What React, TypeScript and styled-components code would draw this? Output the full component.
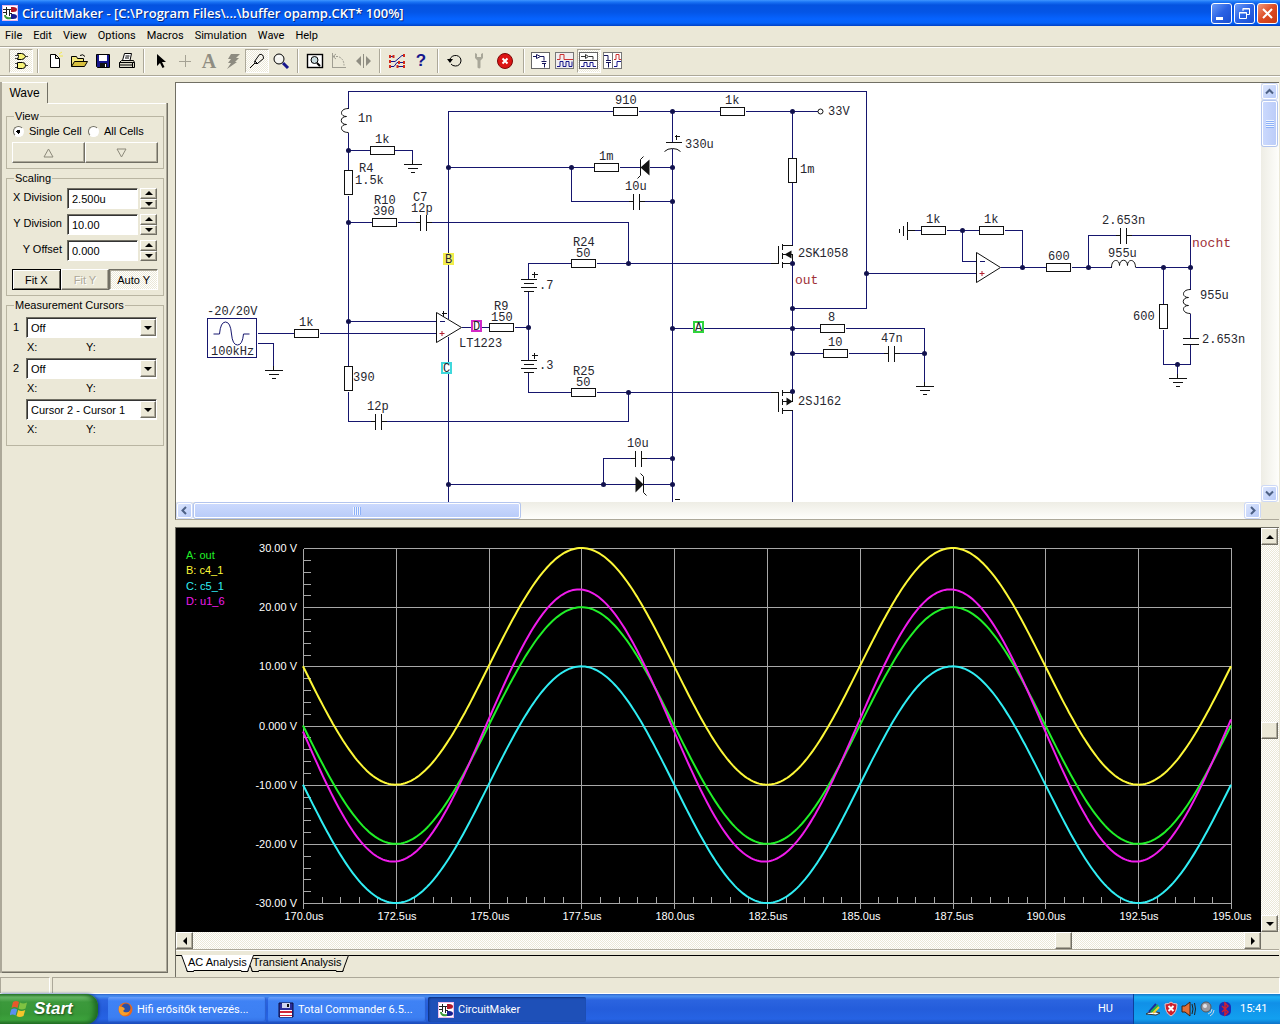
import React from "react";
import styled, { createGlobalStyle, css } from "styled-components";

const face = "#ebe8d7";
const shade = "#aca899";
const dark = "#716f64";
const ui = `Roboto, "Liberation Sans", sans-serif`;
const sans = `"Liberation Sans", Arial, sans-serif`;
const mono = `"Liberation Mono", "Courier New", monospace`;

const Global = createGlobalStyle`
  * { box-sizing: border-box; }
  body { margin: 0; background: ${face}; }
  button, input, select { font: inherit; color: inherit; margin: 0; padding: 0; }
  svg { display: block; }
`;

const raised = css`
  border: 1px solid;
  border-color: #fff ${dark} ${dark} #fff;
  box-shadow: inset -1px -1px 0 ${shade};
`;
const sunken = css`
  border: 1px solid;
  border-color: ${shade} #fff #fff ${shade};
`;
const dither = css`
  background: repeating-conic-gradient(#fff 0 25%, ${face} 0 50%) 0 0 / 2px 2px;
`;

/* ---------- window frame ---------- */

const Desktop = styled.div`
  display: flex;
  flex-direction: column;
  min-height: 100vh;
  background: ${face};
  font: 11px/14px ${sans};
  color: #000;
`;
const TitleBar = styled.header`
  display: flex;
  align-items: center;
  gap: 4px;
  height: 26px;
  padding: 0 2px;
  background: linear-gradient(#3f96ff 0, #1a74f5 2px, #0453e0 5px, #0455e6 12px, #0663ff 19px, #0462f8 23px, #0040c4 26px);
`;
const Title = styled.h1`
  flex: 1;
  margin: 0;
  font: 600 13px/20px "Open Sans", sans-serif;
  color: #fff;
  text-shadow: 1px 1px 0 #0a2a80;
  white-space: nowrap;
`;
const Captions = styled.div`
  display: flex;
  gap: 2px;
`;
const Caption = styled.button<{ $close?: boolean }>`
  width: 21px;
  height: 21px;
  border: 1px solid #fff;
  border-radius: 3px;
  background: ${(p) =>
    p.$close
      ? "linear-gradient(135deg, #f0987c, #dd4a22 50%, #c73a14)"
      : "linear-gradient(135deg, #6c9cf8, #2a62e4 50%, #1b4fd0)"};
`;
const MenuBar = styled.nav`
  display: flex;
  gap: 11px;
  height: 20px;
  padding: 0 5px;
  align-items: center;
  font: 11px/16px ${ui};
`;
const MenuItem = styled.button`
  border: 0;
  background: none;
`;
const ToolBar = styled.div`
  display: flex;
  align-items: center;
  height: 30px;
  padding-left: 9px;
  border-top: 1px solid ${shade};
  border-bottom: 1px solid ${shade};
  box-shadow: inset 0 1px 0 #fff, 0 1px 0 #fff;
`;
const Tool = styled.button<{ $on?: boolean; $wide?: boolean }>`
  display: grid;
  place-items: center;
  width: ${(p) => (p.$wide ? 28 : 24)}px;
  height: 24px;
  border: 0;
  background: none;
  ${(p) => p.$on && css`${dither} ${sunken}`}
  svg { flex: none; }
`;
const ToolGap = styled.span`
  width: 10px;
  height: 24px;
  background: linear-gradient(90deg, transparent 4px, ${shade} 4px 5px, #fff 5px 6px, transparent 6px);
`;

/* ---------- side panel ---------- */

const Main = styled.main`
  display: flex;
  flex: 1;
  padding-top: 6px;
`;
const Side = styled.aside`
  display: flex;
  flex-direction: column;
  width: 168px;
  margin-right: 7px;
  margin-bottom: 4px;
  border-left: 2px solid ${shade};
`;
const SideTab = styled.button`
  align-self: flex-start;
  width: 46px;
  height: 21px;
  border: 0;
  border-right: 1px solid ${dark};
  border-top: 1px solid #fff;
  background: ${face};
  font-size: 12px;
`;
const SideBody = styled.div`
  flex: 1;
  display: flex;
  flex-direction: column;
  gap: 2px;
  padding: 6px 3px 0 4px;
  border-right: 1px solid ${dark};
  border-bottom: 1px solid ${dark};
  box-shadow: inset -1px -1px 0 ${shade};
  background: linear-gradient(#fff, #fff) 46px 0 / 119px 1px no-repeat;
`;
const Group = styled.fieldset`
  min-width: 0;
  margin: 0;
  padding: 1px 5px 5px;
  border: 1px solid #b9b5a2;
`;
const Legend = styled.legend`
  margin-left: 2px;
  padding: 0 1px;
  font-size: 11px;
  line-height: 14px;
`;
const RadioRow = styled.div`
  display: grid;
  grid-template-columns: 75px 1fr;
  padding-left: 1px;
`;
const RadioLabel = styled.label`
  display: flex;
  align-items: center;
  gap: 5px;
  white-space: nowrap;
`;
const Radio = styled.input`
  appearance: none;
  flex: none;
  width: 11px;
  height: 11px;
  border: 1px solid;
  border-color: ${dark} #fff #fff ${dark};
  border-radius: 50%;
  background: #fff;
  &:checked { background: radial-gradient(circle, #000 0 2px, #fff 2px); }
`;
const ButtonRow = styled.div<{ $top: number }>`
  display: flex;
  margin-top: ${(p) => p.$top}px;
  height: 21px;
`;
const PushButton = styled.button<{ $look?: "default" | "down" }>`
  flex: 1;
  display: grid;
  place-items: center;
  background: ${face};
  ${raised}
  &:disabled { color: ${shade}; text-shadow: 1px 1px 0 #fff; }
  ${(p) => p.$look === "default" && css`border-color: #000; box-shadow: inset 1px 1px 0 #fff, inset -1px -1px 0 ${dark};`}
  ${(p) => p.$look === "down" && css`${dither} border-color: ${dark} #fff #fff ${dark}; box-shadow: inset 1px 1px 0 ${shade};`}
`;
const Fields = styled.div`
  display: grid;
  grid-template-columns: 53px 71px 17px;
  column-gap: 2px;
  row-gap: 5px;
  padding-top: 2px;
`;
const FieldLabel = styled.label`
  padding-right: 3px;
  text-align: right;
  line-height: 18px;
  white-space: nowrap;
`;
const TextBox = styled.input`
  width: 100%;
  height: 21px;
  padding: 0 4px;
  background: #fff;
  border: 1px solid;
  border-color: ${dark} #fff #fff ${dark};
  box-shadow: inset 1px 1px 0 #333;
`;
const Spin = styled.div`
  display: grid;
  grid-template-rows: 1fr 1fr;
`;
const SpinButton = styled.button`
  display: grid;
  place-items: center;
  min-height: 0;
  background: ${face};
  ${raised}
`;
const CursorGrid = styled.div`
  display: grid;
  grid-template-columns: 14px 1fr;
  padding-top: 4px;
  padding-right: 1px;
`;
const CursorLabel = styled.label`
  padding-left: 1px;
  line-height: 20px;
`;
const Pick = styled.span`
  position: relative;
  grid-column: 2;
  display: flex;
  height: 21px;
  border: 1px solid;
  border-color: ${dark} #fff #fff ${dark};
  box-shadow: inset 1px 1px 0 #333;
  background: #fff;
`;
const PickSelect = styled.select`
  appearance: none;
  flex: 1;
  border: 0;
  padding: 0 20px 0 4px;
  background: none;
`;
const PickArrow = styled.span`
  position: absolute;
  top: 1px;
  right: 0;
  display: grid;
  place-items: center;
  width: 16px;
  height: 17px;
  background: ${face};
  pointer-events: none;
  ${raised}
`;
const Reading = styled.div`
  grid-column: 2;
  display: grid;
  grid-template-columns: 59px 1fr;
  height: 20px;
  padding-left: 1px;
  line-height: 18px;
`;

/* ---------- documents ---------- */

const Docs = styled.div`
  flex: 1;
  min-width: 0;
  display: flex;
  flex-direction: column;
  gap: 7px;
`;
const Pane = styled.section<{ $fill?: boolean }>`
  display: grid;
  grid-template-columns: minmax(0, 1fr) 18px;
  grid-template-rows: ${(p) => (p.$fill ? "1fr" : "auto")} 17px auto;
  ${(p) => p.$fill && "flex: 1;"}
  border-top: 1px solid ${dark};
  border-left: 1px solid ${dark};
  border-bottom: ${(p) => (p.$fill ? "0" : `1px solid ${shade}`)};
  margin-right: 1px;
`;
const Sheet = styled.div<{ $black?: boolean }>`
  overflow: hidden;
  background: ${(p) => (p.$black ? "#000" : "#fff")};
`;
const LunaBar = styled.div<{ $v?: boolean }>`
  display: flex;
  flex-direction: ${(p) => (p.$v ? "column" : "row")};
  gap: 2px;
  padding: 1px;
  background: ${(p) => (p.$v ? "linear-gradient(90deg, #eeede5, #fefefb)" : "linear-gradient(#eeede5, #fefefb)")};
`;
const LunaButton = styled.button`
  flex: none;
  display: grid;
  place-items: center;
  width: 15px;
  height: 15px;
  border: 1px solid #fff;
  border-radius: 2px;
  background: linear-gradient(135deg, #dbe5fd, #b9cbf8);
  box-shadow: 0 0 0 1px #cdd9f7;
`;
const LunaThumb = styled.div<{ $v?: boolean; $len: number }>`
  display: grid;
  place-items: center;
  width: ${(p) => (p.$v ? "15px" : `${p.$len}px`)};
  height: ${(p) => (p.$v ? `${p.$len}px` : "15px")};
  border: 1px solid #fff;
  border-radius: 2px;
  background: ${(p) => (p.$v ? "linear-gradient(90deg, #cbd9fd, #bccdf9)" : "linear-gradient(#cbd9fd, #b9ccf9)")};
  box-shadow: 0 0 0 1px #b3c5ee;
`;
const Grip = styled.i<{ $v?: boolean }>`
  width: 8px;
  height: 8px;
  background: ${(p) =>
    `repeating-linear-gradient(${p.$v ? "180deg" : "90deg"}, #eef4fe 0 1px, #8cb0f8 1px 2px)`};
`;
const Spacer = styled.span<{ $grow?: number }>`
  flex: ${(p) => p.$grow ?? 1};
`;
const ClassicBar = styled.div<{ $v?: boolean }>`
  display: flex;
  flex-direction: ${(p) => (p.$v ? "column" : "row")};
  ${dither}
`;
const ClassicButton = styled.button`
  flex: none;
  display: grid;
  place-items: center;
  width: 17px;
  height: 17px;
  background: ${face};
  ${raised}
`;
const ClassicThumb = styled.div`
  width: 17px;
  height: 17px;
  background: ${face};
  ${raised}
`;
const SheetTabs = styled.div`
  grid-column: 1 / -1;
  display: flex;
  margin-bottom: 6px;
  border-top: 1px solid ${shade};
  box-shadow: inset 0 1px 0 #fff;
  padding-top: 5px;
`;
const TabRule = styled.span<{ $grow?: boolean }>`
  width: 10px;
  flex: ${(p) => (p.$grow ? 1 : "none")};
  border-top: 1px solid #000;
`;
const SheetTab = styled.button<{ $active?: boolean }>`
  position: relative;
  z-index: ${(p) => (p.$active ? 1 : 0)};
  height: 16px;
  padding: 0 2px;
  margin-right: 2px;
  border: 0;
  border-bottom: 1px solid #000;
  background: ${(p) => (p.$active ? "#fff" : face)};
  box-shadow: ${(p) => (p.$active ? "none" : "inset 0 1px 0 #000")};
  line-height: 15px;
  white-space: nowrap;
  &::before, &::after {
    content: "";
    position: absolute;
    z-index: -1;
    top: 0;
    width: 6px;
    height: 16px;
    border-bottom: 1px solid #000;
    background: inherit;
    box-shadow: inherit;
  }
  &::before { left: -2px; border-left: 1px solid #000; transform: skewX(20deg); }
  &::after { right: -2px; border-right: 1px solid #000; transform: skewX(-20deg); }
`;
const StatusBar = styled.footer`
  display: flex;
  gap: 2px;
  height: 17px;
  border-bottom: 1px solid #fff;
`;
const StatusCell = styled.span<{ $grow?: boolean }>`
  width: 50px;
  flex: ${(p) => (p.$grow ? 1 : "none")};
  ${sunken}
  border-bottom: 0;
`;

/* ---------- taskbar ---------- */

const TaskBar = styled.footer`
  display: flex;
  height: 30px;
  background: linear-gradient(#2b62c8 0, #4a90f2 2px, #2b64e0 6px, #245ddb 15px, #2663e4 25px, #1c4bb8 30px);
  font: 11px/16px ${ui};
  color: #fff;
`;
const Start = styled.button`
  display: flex;
  align-items: center;
  gap: 6px;
  width: 98px;
  padding-left: 10px;
  border: 0;
  border-radius: 0 12px 12px 0;
  background: linear-gradient(#2d7d2d 0, #6cbb6a 3px, #3c993c 8px, #379737 20px, #3da33d 26px, #247024 30px);
  box-shadow: inset -4px 0 5px #1f6a24, 1px 0 3px #12378f;
  font: italic 700 17px/24px ${sans};
  color: #fff;
  text-shadow: 1px 1px 2px #1c4a1c;
`;
const Tasks = styled.div`
  flex: 1;
  display: flex;
  gap: 2px;
  padding: 3px 0 2px 10px;
`;
const Task = styled.button<{ $active?: boolean }>`
  flex: 0 1 158px;
  display: flex;
  align-items: center;
  gap: 4px;
  min-width: 0;
  padding-left: 10px;
  border: 0;
  border-radius: 2px;
  background: ${(p) =>
    p.$active ? "#1e50b8" : "linear-gradient(#6ba0fb 0, #3f82f5 4px, #3c7ff2 20px, #3472e6 25px)"};
  box-shadow: ${(p) => (p.$active ? "inset 1px 1px 2px #0d2f7d" : "inset -1px -1px 1px #2a5fd0")};
  white-space: nowrap;
`;
const Lang = styled.span`
  align-self: center;
  padding-right: 20px;
`;
const Tray = styled.div`
  display: flex;
  align-items: center;
  gap: 2px;
  width: 147px;
  padding-left: 11px;
  border-left: 1px solid #0d3f9c;
  background: linear-gradient(#1577c8 0, #1cb0f6 3px, #1090e8 9px, #12a0f0 25px, #0d72c8 30px);
`;
const Clock = styled.time`
  margin-left: 5px;
`;

/* ---------- small drawings ---------- */

const Arrow = ({ dir, size = 4, fill = "#000" }: { dir: "up" | "down" | "left" | "right"; size?: number; fill?: string }) => {
  const s = size;
  const pts = {
    up: `0,${s} ${s},0 ${2 * s},${s}`,
    down: `0,0 ${s},${s} ${2 * s},0`,
    left: `${s},0 0,${s} ${s},${2 * s}`,
    right: `0,0 ${s},${s} 0,${2 * s}`,
  }[dir];
  const tall = dir === "left" || dir === "right";
  return (
    <svg width={tall ? s : 2 * s} height={tall ? 2 * s : s}>
      <polygon points={pts} fill={fill} />
    </svg>
  );
};

const Chevron = ({ d }: { d: string }) => (
  <svg width="9" height="9" viewBox="0 0 9 9">
    <path d={d} fill="none" stroke="#4d6185" strokeWidth="2" />
  </svg>
);

const Logo = () => (
  <svg width="16" height="16" viewBox="0 0 16 16">
    <rect width="16" height="16" fill="#fff" stroke="#e8b8e8" strokeWidth="2" />
    <path d="M1 4.500h9M1 7.500h4M4.500 2v8M7.500 5v6M7 8.500h3" fill="none" stroke="#222" />
    <path d="M3 10q0 4 6 3" fill="none" stroke="#3b9a3b" strokeWidth="2" />
    <path d="M9 2h2q4 0 4 2.500t-4 2.500H9z" fill="#b01828" />
    <path d="M9 9h2q4 0 4 2.500t-4 2.500H9z" fill="#182090" />
  </svg>
);

type Paint = React.SVGProps<SVGSVGElement>;
const Ico = (p: Paint) => <svg width="20" height="20" viewBox="0 0 20 20" fill="none" stroke="#000" {...p} />;

const icons = {
  gates: (
    <Ico>
      <path d="M4 4.500h4M4 7.500h4M14 5.500h3M4 12.500h4M4 16.500h4M14 14.500h3" stroke="#444" />
      <path d="M6.500 2.500h4q3 0 4 3q-1 3-4 3h-4q2-3 0-6zM6.500 11.500h5q3 0 3 3t-3 3h-5z" fill="#f7f37a" />
    </Ico>
  ),
  blank: (
    <Ico>
      <path d="M14 3l3-2M14 5h4" stroke="#f2e94e" />
      <path d="M5.500 3.500h5l4 4v9h-9zM10.500 3.500v4h4" fill="#fff" />
    </Ico>
  ),
  open: (
    <Ico>
      <path d="M2.500 15.500v-10h5l1 2h6v3" fill="#f3e87a" />
      <path d="M2.500 15.500l3-5h13l-3 5z" fill="#d8c040" />
      <path d="M11 4.500q3-2 5 1" />
    </Ico>
  ),
  save: (
    <Ico>
      <path d="M3.500 3.500h13v13h-12l-1-1z" fill="#16168c" />
      <path d="M6 4h8v6H6z" fill="#fff" stroke="none" />
      <path d="M7 12h7v4H7z" fill="#111" stroke="none" />
      <path d="M12 13h1v3h-1z" fill="#fff" stroke="none" />
    </Ico>
  ),
  print: (
    <Ico>
      <path d="M5.500 9.500l2-7h7l-1.500 7z" fill="#fff" />
      <path d="M8.500 5h4M8 7h4" />
      <path d="M2.500 11.500l2-2h12l1 2v5h-15z" fill="#dcd9c8" />
      <path d="M2.500 11.500h13v5M2.500 14h13M15.500 11.500h2" />
    </Ico>
  ),
  pointer: (
    <Ico>
      <path d="M6 3v12l3-3 2.500 5 2-1-2.500-5h4z" fill="#000" stroke="none" />
    </Ico>
  ),
  plus: (
    <Ico stroke="#a5a294">
      <path d="M4 10.500h12M10.500 4v12" />
    </Ico>
  ),
  bolt: (
    <Ico>
      <path d="M8 3h9l-4 4h3l-4 4h2L4 18l4-6H5l3-4H5z" fill="#8d8b80" stroke="none" />
    </Ico>
  ),
  probe: (
    <Ico>
      <path d="M3 17l5-5M7.500 10.500l5-7q4-1 4 4l-6 5q-3 1-3-2z" />
      <path d="M8 10l3 3" />
    </Ico>
  ),
  lens: (
    <Ico>
      <circle cx="8" cy="8" r="5" fill="#f4f4f0" />
      <path d="M12 12l5 5" stroke="#16168c" strokeWidth="3" />
      <path d="M6 6l3-1" stroke="#fff" />
    </Ico>
  ),
  page: (
    <Ico>
      <rect x="2.500" y="3.500" width="15" height="13" fill="#fff" strokeWidth="1.400" />
      <circle cx="9.500" cy="9" r="3.500" fill="#c9dce0" />
      <path d="M12 12l3 3" strokeWidth="2" />
    </Ico>
  ),
  rotate: (
    <Ico stroke="#a09e92">
      <path d="M3.500 2v15M3 16.500h14" />
      <path d="M4 5.500h5q6 2 6 9" strokeDasharray="2 1" />
      <path d="M7 3l-3 2.500 3 2.500" />
    </Ico>
  ),
  flip: (
    <Ico stroke="none" fill="#8f8d82">
      <path d="M8 5v10L3 10zM13 5v10l5-5z" />
      <path d="M10 3h1v14h-1z" />
    </Ico>
  ),
  trace: (
    <Ico stroke="#16168c">
      <path d="M3 5.500h4M3 10.500h5l7-6h3M3 15.500h4l3-4h7M10 15.500h7" />
      <path d="M3 4v3M3 9v3M3 14v3M17 3v3M17 10v3M17 14v3M6.500 4v3M12 10v3M10.500 14v3" stroke="#d42a1a" strokeWidth="2" />
    </Ico>
  ),
  undo: (
    <Ico>
      <path d="M4.500 9q2-5 7-4.500 4.500 1 4.500 5.500-1 5-5.500 5-3 0-4.500-2" />
      <path d="M2 8h6l-3 4z" fill="#000" stroke="none" />
    </Ico>
  ),
  wrench: (
    <Ico>
      <path d="M6 2v5l2.500 2.500v7q2 2 3 0v-7L14 7V2l-2 1v3H8V3z" fill="#a9a799" stroke="none" />
    </Ico>
  ),
  stop: (
    <Ico>
      <circle cx="10" cy="10" r="7.500" fill="#dc1414" stroke="#7c0808" />
      <path d="M7.500 7.500l5 5M12.500 7.500l-5 5" stroke="#fff" strokeWidth="2" />
    </Ico>
  ),
  schem: (
    <Ico stroke="#222">
      <rect x=".500" y="1.500" width="18" height="16" fill="#fff" stroke="#666" />
      <path d="M2 5.500h3M5.500 3.500v4l4-2zM9 5.500h4v4M10.500 10.500h5M11 12.500h4M13.500 12.500v4" stroke="#16165c" />
    </Ico>
  ),
  wave: (
    <Ico>
      <rect x=".500" y="1.500" width="18" height="16" fill="#f1eef0" stroke="#777" />
      <path d="M2 8.500h3v-5h4v5h9" stroke="#cc3030" />
      <path d="M2 15.500h3v-5h3v5h3v-5h3v5h3v-5" stroke="#16168c" />
    </Ico>
  ),
  splitH: (
    <Ico>
      <rect x=".500" y="1.500" width="18" height="16" fill="#fff" stroke="#666" />
      <path d="M1 9.500h17M2 5.500h4M6.500 3.500v4l3-2zM10 5.500h4v3" stroke="#333" />
      <path d="M2 15.500h3v-4h3v4h3v-4h3v4h3" stroke="#16168c" />
    </Ico>
  ),
  splitV: (
    <Ico>
      <rect x=".500" y="1.500" width="18" height="16" fill="#fff" stroke="#777" />
      <path d="M9.500 1v17" stroke="#777" />
      <path d="M1 4.500h4v5M3 9.500h5M3 11.500h5M5.500 11.500v5" stroke="#16165c" />
      <path d="M11 8.500h2v-5h3v5h2" stroke="#cc3030" />
      <path d="M11 15.500h3v-5h4" stroke="#16168c" />
    </Ico>
  ),
};

const Glyph = styled.b<{ $grey?: boolean }>`
  font: ${(p) => (p.$grey ? `700 20px/22px "Liberation Serif", serif` : `700 17px/22px ${sans}`)};
  color: ${(p) => (p.$grey ? "#8f8d82" : "#16168c")};
`;

type ToolDef = { name: string; icon: React.ReactNode; on?: boolean; wide?: boolean };
const toolGroups: ToolDef[][] = [
  [{ name: "Parts", icon: icons.gates, on: true }],
  [
    { name: "New", icon: icons.blank },
    { name: "Open", icon: icons.open },
    { name: "Save", icon: icons.save },
    { name: "Print", icon: icons.print },
  ],
  [
    { name: "Arrow", icon: icons.pointer },
    { name: "Wire", icon: icons.plus },
    { name: "Text", icon: <Glyph $grey>A</Glyph> },
    { name: "Delete", icon: icons.bolt },
    { name: "Probe", icon: icons.probe, on: true },
    { name: "Zoom", icon: icons.lens },
  ],
  [
    { name: "Find", icon: icons.page },
    { name: "Rotate", icon: icons.rotate },
    { name: "Mirror", icon: icons.flip },
  ],
  [
    { name: "Trace", icon: icons.trace },
    { name: "Help", icon: <Glyph>?</Glyph> },
  ],
  [
    { name: "Reset", icon: icons.undo },
    { name: "Setup", icon: icons.wrench },
    { name: "Stop", icon: icons.stop, wide: true },
  ],
  [
    { name: "Schematic only", icon: icons.schem },
    { name: "Waves only", icon: icons.wave },
    { name: "Split horizontally", icon: icons.splitH, on: true },
    { name: "Split vertically", icon: icons.splitV },
  ],
];

/* ---------- schematic ---------- */

const Wire = styled.path`
  fill: none;
  stroke: #16166e;
  shape-rendering: crispEdges;
`;
const Ink = styled.path`
  fill: none;
  stroke: #111;
  shape-rendering: crispEdges;
`;
const Curve = styled.path`
  fill: none;
  stroke: #111;
`;
const Solid = styled.path`
  fill: #111;
`;
const Body = styled.rect`
  fill: #fff;
  stroke: #111;
  shape-rendering: crispEdges;
`;
const PartText = styled.text<{ $net?: boolean }>`
  font: ${(p) => (p.$net ? 13 : 12)}px ${mono};
  fill: ${(p) => (p.$net ? "#a03038" : "#26262e")};
`;

const wires = [
  "M348 108V91H866V308H792",
  "M348 132V170M348 150H370M394 150H412V164",
  "M348 195V366M348 391V421H375M381 421H628V392",
  "M348 222H372M397 222H420M426 222H628V263",
  "M348 321H436M257 333H294M319 333H436M257 343H273V370",
  "M613 111H448V318M448 336V501M638 111H720M745 111H817",
  "M448 167H594M619 167H640M649 167H672M571 167V201H633M639 201H672",
  "M672 111V142M672 148V501M672 328H820M845 328H924V386",
  "M792 111V158M792 182V245M792 263V391M792 410V501M792 353H823M848 353H888M894 353H924",
  "M528 279V263H571M596 263H778M528 291V360M528 372V392H571M596 392H778",
  "M461 327H489M514 327H528",
  "M448 484H635M643 484H672M603 484V458H635M641 458H672",
  "M866 273H976M907 230H921M946 230H979M1004 230H1022V267M962 230V261H976",
  "M1000 267H1046M1071 267H1111M1135 267H1190M1088 267V235H1120M1126 235H1190V289",
  "M1163 267V304M1163 329V364H1190V344M1190 313V338M1177 364V378",
];
const joints = [
  [348, 150], [348, 222], [348, 321], [448, 167], [448, 484], [571, 167], [672, 111], [672, 167], [672, 201],
  [672, 328], [672, 458], [672, 484], [792, 111], [792, 263], [792, 308], [792, 328], [792, 353], [792, 391],
  [628, 263], [628, 392], [528, 327], [603, 484], [866, 273], [924, 353], [962, 230], [1022, 267], [1088, 267],
  [1163, 267], [1190, 267], [1177, 364],
];
const flatResistors = [
  [370, 146], [372, 218], [613, 107], [720, 107], [594, 163], [571, 259], [571, 388], [294, 329], [489, 323],
  [820, 324], [823, 349], [921, 226], [979, 226], [1046, 263],
];
const uprightResistors = [[344, 170], [344, 366], [788, 158], [1159, 304]];
const capacitors = [[420, 222], [375, 421], [633, 201], [635, 458], [888, 353], [1120, 235]];
const grounds = [[412, 164], [273, 370], [924, 386], [1177, 378]];
const labels: [number, number, string][] = [
  [358, 122, "1n"], [375, 143, "1k"], [359, 172, "R4"], [355, 184, "1.5k"], [374, 204, "R10"], [373, 215, "390"],
  [413, 201, "C7"], [411, 212, "12p"], [615, 104, "910"], [725, 104, "1k"], [828, 115, "33V"], [685, 148, "330u"],
  [599, 160, "1m"], [625, 190, "10u"], [800, 173, "1m"], [573, 246, "R24"], [576, 257, "50"], [539, 289, ".7"],
  [798, 257, "2SK1058"], [207, 315, "-20/20V"], [211, 355, "100kHz"], [299, 326, "1k"], [353, 381, "390"],
  [367, 410, "12p"], [494, 310, "R9"], [491, 321, "150"], [459, 347, "LT1223"], [539, 369, ".3"], [573, 375, "R25"],
  [576, 386, "50"], [627, 447, "10u"], [828, 321, "8"], [828, 346, "10"], [881, 342, "47n"], [798, 405, "2SJ162"],
  [926, 223, "1k"], [984, 223, "1k"], [1048, 260, "600"], [1102, 224, "2.653n"], [1108, 257, "955u"],
  [1133, 320, "600"], [1200, 299, "955u"], [1202, 343, "2.653n"],
];
const probes: [number, number, string, string][] = [
  [443, 253, "#f2ee4a", "B"], [471, 320, "#d428c8", "D"], [441, 362, "#3fd8dc", "C"], [693, 321, "#2fd43c", "A"],
];

const coilDown = (x: number, y: number) =>
  `M${x} ${y}C${x - 9} ${y} ${x - 9} ${y + 8} ${x - 2} ${y + 8}C${x - 9} ${y + 8} ${x - 9} ${y + 16} ${x - 2} ${y + 16}C${x - 9} ${y + 16} ${x - 9} ${y + 24} ${x} ${y + 24}`;
const coilAcross = (x: number, y: number) =>
  `M${x} ${y}C${x} ${y - 9} ${x + 8} ${y - 9} ${x + 8} ${y - 2}C${x + 8} ${y - 9} ${x + 16} ${y - 9} ${x + 16} ${y - 2}C${x + 16} ${y - 9} ${x + 24} ${y - 9} ${x + 24} ${y}`;

const Schematic = () => (
  <svg width="1085" height="419" viewBox="176 83 1085 419" role="img" aria-label="Buffer schematic">
    <g transform="translate(.5 .5)">
      {wires.map((d) => <Wire key={d} d={d} />)}
      {flatResistors.map(([x, y]) => <Body key={`${x},${y}`} x={x} y={y} width="24" height="8" />)}
      {uprightResistors.map(([x, y]) => <Body key={`${x},${y}`} x={x} y={y} width="8" height="24" />)}
      {capacitors.map(([x, y]) => (
        <Ink key={`${x},${y}`} d={`M${x} ${y - 8}v16M${x + 6} ${y - 8}v16M${x - 5} ${y}h5M${x + 6} ${y}h5`} />
      ))}
      {grounds.map(([x, y]) => (
        <Ink key={`${x},${y}`} d={`M${x - 9} ${y}h18M${x - 5} ${y + 4}h10M${x - 2} ${y + 8}h4M${x} ${y}v-5`} />
      ))}
      <Ink d="M907 221v18M903 225v10M899 228v4M907 230h7" />
      <Ink d="M1182 338h16M1182 344h16" />
      <Ink d="M665 142h16M674 136h5M676 134v5M674 499h5" />
      <Curve d="M664 151q3-3 8-3t8 3" />
      {[279, 360].map((y) => (
        <Ink key={y} d={`M520 ${y}h16M523 ${y + 4}h10M520 ${y + 8}h16M523 ${y + 12}h10M531 ${y - 5}h6M534 ${y - 8}v6`} />
      ))}
      <Curve d={coilDown(348, 108)} />
      <Curve d={coilDown(1190, 289)} />
      <Curve d={coilAcross(1111, 267)} />
      <Curve d="M436 312V342L461 327ZM976 252V282L1000 267Z" />
      <Wire d="M439 321h5M979 261h5" />
      <Ink d="M441 313h5M443 310v6" />
      <path d="M439 333h5M441.500 330.500v5M979 273h5M981.500 270.500v5" stroke="#b02030" />
      <Solid d="M640 167l9-8v16zM643 484l-8-8v16zM784 254l7-4v8zM792 401l-6-4v8z" />
      <Curve d="M643 156l-3 3v16l-3 3M640 473l3 3v16l3 3" />
      <Ink d="M778 245v18M782 243v6M782 252v6M782 261v6M782 245h10M782 254h10v9M782 263h10M770 263h8" />
      <Ink d="M778 392v19M782 389v6M782 398v6M782 407v6M782 392h10M782 401h10v-9M782 410h10M770 392h8" />
      <Wire d="M207 318H256V357H207Z" />
      <path d="M213 333.500h6q1-12 6-12t6 12q1 11 6 11t6-11h6" fill="none" stroke="#16166e" />
      {joints.map(([x, y]) => <circle key={`${x},${y}`} cx={x} cy={y} r="2.500" fill="#12124e" />)}
      <circle cx="820" cy="111" r="2.500" fill="#fff" stroke="#111" />
      {probes.map(([x, y, color, name]) => (
        <rect key={name} x={x + 0.5} y={y + 0.5} width="9" height="10" fill={name === "B" ? "#f8f480" : "#fff"} stroke={color} strokeWidth="2" />
      ))}
    </g>
    {probes.map(([x, y, , name]) => <PartText key={name} x={x + 2} y={y + 10}>{name}</PartText>)}
    {labels.map(([x, y, s]) => <PartText key={`${x},${y}`} x={x} y={y}>{s}</PartText>)}
    <PartText $net x="795" y="284">out</PartText>
    <PartText x="1192" y="247" fill="#a03038" $net>nocht</PartText>
  </svg>
);

/* ---------- wave plot ---------- */

const GX = 127;
const GY = 20;
const GW = 928;
const GH = 355;

const traces = [
  { name: "A: out", color: "#20f028", mid: 0, amp: 20, peak: 177.5 },
  { name: "B: c4_1", color: "#fdf838", mid: 10, amp: 20, peak: 177.5 },
  { name: "C: c5_1", color: "#30eef4", mid: -10, amp: 20, peak: 177.5 },
  { name: "D: u1_6", color: "#f01cec", mid: 0, amp: 23, peak: 177.43 },
];
const tracePath = (mid: number, amp: number, peak: number) => {
  const pts: string[] = [];
  for (let i = 0; i <= GW; i += 2) {
    const t = 170 + (i / GW) * 25;
    const v = mid + amp * Math.cos(((t - peak) * Math.PI) / 5);
    pts.push(`${GX + i},${(GY + ((30 - v) / 60) * GH).toFixed(1)}`);
  }
  return pts.join(" ");
};
const volts = ["30.00 V", "20.00 V", "10.00 V", "0.000 V", "-10.00 V", "-20.00 V", "-30.00 V"];
const PlotText = styled.text`
  font: 11px ${sans};
  fill: ${(p) => p.fill ?? "#fff"};
`;
const Rule = styled.path`
  stroke: #a8a8a8;
  shape-rendering: crispEdges;
`;

const Plot = () => {
  const col = GW / 10;
  const row = GH / 6;
  let grid = "";
  for (let i = 0; i <= 10; i++) grid += `M${Math.round(GX + i * col)} ${GY}v${GH + 5}`;
  for (let i = 0; i <= 6; i++) grid += `M${GX} ${Math.round(GY + i * row)}h${GW}`;
  for (let i = 1; i < 50; i++) grid += `M${Math.round(GX + (i * col) / 5)} ${GY + GH}v-7`;
  for (let i = 1; i < 30; i++) grid += `M${GX} ${Math.round(GY + (i * row) / 5)}h7`;
  return (
    <svg width="1085" height="404" viewBox="0 0 1085 404" role="img" aria-label="Transient analysis waveforms">
      <g transform="translate(.5 .5)">
        <Rule d={grid} />
      </g>
      {traces.map((t, i) => (
        <g key={t.name}>
          <polyline points={tracePath(t.mid, t.amp, t.peak)} fill="none" stroke={t.color} strokeWidth="2" />
          <PlotText x="10" y={31 + Math.round(i * 15.4)} fill={t.color}>{t.name}</PlotText>
        </g>
      ))}
      {volts.map((v, i) => (
        <PlotText key={v} x="121" y={Math.round(GY + i * row) + 4} textAnchor="end">{v}</PlotText>
      ))}
      {Array.from({ length: 11 }, (_, i) => (
        <PlotText key={i} x={Math.round(GX + i * col) + 1} y="392" textAnchor="middle">
          {(170 + i * 2.5).toFixed(1)}us
        </PlotText>
      ))}
    </svg>
  );
};

/* ---------- page ---------- */

const SpinField = ({ id, label, value }: { id: string; label: string; value: string }) => (
  <>
    <FieldLabel htmlFor={id}>{label}</FieldLabel>
    <TextBox id={id} defaultValue={value} />
    <Spin>
      <SpinButton aria-label={`${label} up`}><Arrow dir="up" /></SpinButton>
      <SpinButton aria-label={`${label} down`}><Arrow dir="down" /></SpinButton>
    </Spin>
  </>
);

const CursorPick = ({ id, label, value }: { id: string; label?: string; value: string }) => (
  <>
    {label && <CursorLabel htmlFor={id}>{label}</CursorLabel>}
    <Pick>
      <PickSelect id={id} defaultValue={value} aria-label={label ? undefined : "Difference"}>
        <option>{value}</option>
      </PickSelect>
      <PickArrow><Arrow dir="down" /></PickArrow>
    </Pick>
    <Reading><span>X:</span><span>Y:</span></Reading>
  </>
);

export default function App() {
  return (
    <Desktop>
      <Global />
      <TitleBar>
        <Logo />
        <Title>CircuitMaker - [C:\Program Files\...\buffer opamp.CKT* 100%]</Title>
        <Captions>
          <Caption aria-label="Minimize">
            <svg width="19" height="19"><path d="M4 13h7v3H4z" fill="#fff" /></svg>
          </Caption>
          <Caption aria-label="Restore">
            <svg width="19" height="19" fill="none" stroke="#fff">
              <path d="M8 7V4.500h6.500v6H12M7.500 5h7" />
              <path d="M4.500 8.500h7v6h-7zM4 9h8" />
            </svg>
          </Caption>
          <Caption $close aria-label="Close">
            <svg width="19" height="19"><path d="M5 5l9 9M14 5l-9 9" stroke="#fff" strokeWidth="2" /></svg>
          </Caption>
        </Captions>
      </TitleBar>
      <MenuBar>
        {["File", "Edit", "View", "Options", "Macros", "Simulation", "Wave", "Help"].map((m) => (
          <MenuItem key={m}>{m}</MenuItem>
        ))}
      </MenuBar>
      <ToolBar>
        {toolGroups.map((group, i) => (
          <React.Fragment key={group[0].name}>
            {i > 0 && <ToolGap />}
            {group.map((t) => (
              <Tool key={t.name} aria-label={t.name} $on={t.on} $wide={t.wide}>{t.icon}</Tool>
            ))}
          </React.Fragment>
        ))}
      </ToolBar>

      <Main>
        <Side>
          <SideTab>Wave</SideTab>
          <SideBody>
            <Group>
              <Legend>View</Legend>
              <RadioRow>
                <RadioLabel><Radio type="radio" name="cells" defaultChecked />Single Cell</RadioLabel>
                <RadioLabel><Radio type="radio" name="cells" />All Cells</RadioLabel>
              </RadioRow>
              <ButtonRow $top={4}>
                <PushButton aria-label="Previous cell">
                  <svg width="11" height="10"><path d="M1 9h9L5.500 1z" fill="none" stroke="#8c897a" /></svg>
                </PushButton>
                <PushButton aria-label="Next cell">
                  <svg width="11" height="10"><path d="M1 1h9L5.500 9z" fill="none" stroke="#8c897a" /></svg>
                </PushButton>
              </ButtonRow>
            </Group>
            <Group>
              <Legend>Scaling</Legend>
              <Fields>
                <SpinField id="xdiv" label="X Division" value="2.500u" />
                <SpinField id="ydiv" label="Y Division" value="10.00" />
                <SpinField id="yoff" label="Y Offset" value="0.000" />
              </Fields>
              <ButtonRow $top={8}>
                <PushButton $look="default">Fit X</PushButton>
                <PushButton disabled>Fit Y</PushButton>
                <PushButton $look="down">Auto Y</PushButton>
              </ButtonRow>
            </Group>
            <Group>
              <Legend>Measurement Cursors</Legend>
              <CursorGrid>
                <CursorPick id="c1" label="1" value="Off" />
                <CursorPick id="c2" label="2" value="Off" />
                <CursorPick id="diff" value="Cursor 2 - Cursor 1" />
              </CursorGrid>
            </Group>
          </SideBody>
        </Side>

        <Docs>
          <Pane>
            <Sheet><Schematic /></Sheet>
            <LunaBar $v>
              <LunaButton aria-label="Scroll up"><Chevron d="M1 6.500l3.500-3.500L8 6.500" /></LunaButton>
              <LunaThumb $v $len={45}><Grip $v /></LunaThumb>
              <Spacer />
              <LunaButton aria-label="Scroll down"><Chevron d="M1 2.500l3.500 3.500L8 2.500" /></LunaButton>
            </LunaBar>
            <LunaBar>
              <LunaButton aria-label="Scroll left"><Chevron d="M6 1L2.500 4.500 6 8" /></LunaButton>
              <LunaThumb $len={326}><Grip /></LunaThumb>
              <Spacer />
              <LunaButton aria-label="Scroll right"><Chevron d="M3 1l3.500 3.500L3 8" /></LunaButton>
            </LunaBar>
          </Pane>
          <Pane $fill>
            <Sheet $black><Plot /></Sheet>
            <ClassicBar $v>
              <ClassicButton aria-label="Plot up"><Arrow dir="up" /></ClassicButton>
              <Spacer />
              <ClassicThumb />
              <Spacer />
              <ClassicButton aria-label="Plot down"><Arrow dir="down" /></ClassicButton>
            </ClassicBar>
            <ClassicBar>
              <ClassicButton aria-label="Plot left"><Arrow dir="left" /></ClassicButton>
              <Spacer $grow={5} />
              <ClassicThumb />
              <Spacer />
              <ClassicButton aria-label="Plot right"><Arrow dir="right" /></ClassicButton>
            </ClassicBar>
            <SheetTabs>
              <TabRule />
              <SheetTab $active>AC Analysis</SheetTab>
              <SheetTab>Transient Analysis</SheetTab>
              <TabRule $grow />
            </SheetTabs>
          </Pane>
        </Docs>
      </Main>

      <StatusBar>
        <StatusCell />
        <StatusCell $grow />
      </StatusBar>

      <TaskBar>
        <Start>
          <svg width="18" height="18" viewBox="0 0 18 18">
            <path d="M3 2q3-2 6 0L7.500 8q-3-2-6 0z" fill="#e8582c" />
            <path d="M10 2.500q3 2 7 0L15.500 8.500q-4 2-7 0z" fill="#7fc242" />
            <path d="M1.200 9.500q3-2 6 0L5.500 15.500q-3-2-6 0z" fill="#5a8ff0" />
            <path d="M8.200 10q3 2 7 0L13.500 16q-4 2-7 0z" fill="#f6c52c" />
          </svg>
          Start
        </Start>
        <Tasks>
          <Task>
            <svg width="15" height="15" viewBox="0 0 15 15">
              <circle cx="7.500" cy="7.500" r="7" fill="#e8681c" />
              <circle cx="8" cy="6" r="4.500" fill="#2a4fa8" />
              <path d="M1 4q2 1 4 1l2 2-2 2q3 3 7 0-2 5-7 4.500Q0 12 1 4z" fill="#f6a02c" />
            </svg>
            Hifi erősítők tervezés...
          </Task>
          <Task>
            <svg width="16" height="16" viewBox="0 0 16 16">
              <path d="M1 1h14v14H1z" fill="#2a2f9c" stroke="#0c0c3c" />
              <path d="M4 1h8v5H4z" fill="#cfd4ee" />
              <path d="M9 2h2v3H9z" fill="#111" />
              <path d="M2 8h12v7H2z" fill="#fff" />
              <path d="M2 9h12v2H2zM2 13h12v1H2z" fill="#d02838" />
            </svg>
            Total Commander 6.5...
          </Task>
          <Task $active><Logo />CircuitMaker</Task>
        </Tasks>
        <Lang>HU</Lang>
        <Tray>
          <svg width="16" height="16" viewBox="0 0 16 16">
            <path d="M1 13q5-4 14-1l-4 2z" fill="#fff" stroke="#333" />
            <path d="M4 11l7-8" stroke="#1c2c9c" strokeWidth="2" />
            <path d="M6 11l7-7" stroke="#28b040" strokeWidth="2" />
            <path d="M8 12l6-6" stroke="#f0d020" strokeWidth="2" />
          </svg>
          <svg width="16" height="16" viewBox="0 0 16 16">
            <path d="M2 3q4 0 6-2 2 2 6 2 0 9-6 12Q2 12 2 3z" fill="#cc1f2c" stroke="#e8c8c8" />
            <path d="M5.500 5l5 5M10.500 5l-5 5" stroke="#fff" strokeWidth="2" />
          </svg>
          <svg width="16" height="16" viewBox="0 0 16 16">
            <path d="M1 5h3l5-4v14l-5-4H1z" fill="#e07038" stroke="#402010" />
            <path d="M11 3q2 5 0 10M13.500 2q2 6 0 12" fill="none" stroke="#222" />
          </svg>
          <svg width="16" height="16" viewBox="0 0 16 16">
            <circle cx="7" cy="6" r="5" fill="#9a9aa0" stroke="#55565c" />
            <circle cx="6" cy="5" r="2" fill="#e4e4ea" />
            <path d="M9 13q4-1 4-5M11 15q4-2 4-6" fill="none" stroke="#c8d4e8" />
          </svg>
          <svg width="16" height="16" viewBox="0 0 16 16">
            <rect x="2" y="1" width="12" height="14" rx="5" fill="#1c2cb4" />
            <path d="M5 5l6 6-3 3V2l3 3-6 6" fill="none" stroke="#d02030" strokeWidth="1.500" />
          </svg>
          <Clock>15:41</Clock>
        </Tray>
      </TaskBar>
    </Desktop>
  );
}
